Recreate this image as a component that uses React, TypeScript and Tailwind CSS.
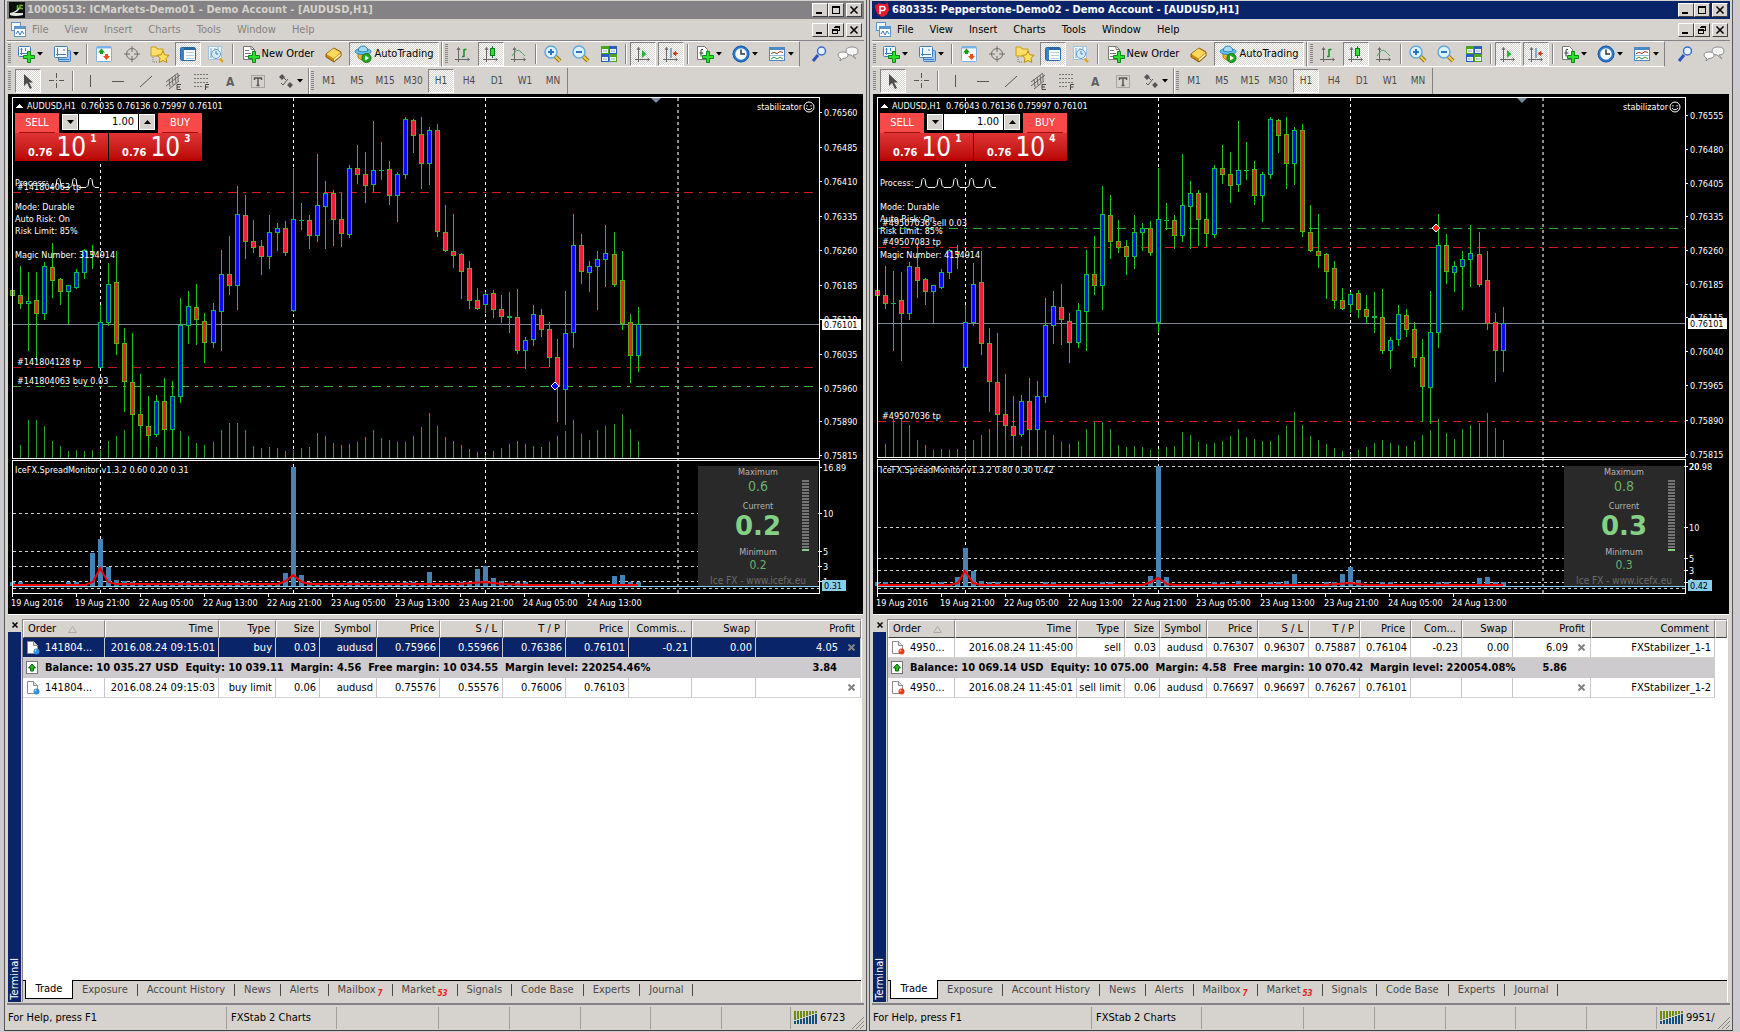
import type { ReactNode } from "react";

type Candle = [high: number, top: number, bottom: number, low: number, dir: string];

type Level = { y: number; color: string; label: string; }

type Terminal = {
    id: string;
    title: string;
    active: boolean;
    quotes: string;
    buyPip: string;
    magic: string;
    waves: number;
    priceY: number;
    splitY: number;
    levels: Level[];
    marker: { x: number; y: number; color: string };
    prices: [string, number][];
    spread: { title: string; max: string; current: string; min: string; avg: string };
    spreadAxis: [string, number][];
    spreadGrid: number[];
    spreadBars: Record<number, number>;
    spreadLine: string;
    overrides: Record<number, Candle>;
    columns: { name: string; width: string }[];
    rows: string[][];
    balance: string;
    balanceProfit: string;
    side: string;
    traffic: string;
}

const candles: Candle[] = [
    [261, 290, 295, 302, "d"], [266, 295, 303, 309, "d"], [272, 301, 303, 351, "u"], [272, 300, 313, 361, "d"],
    [262, 266, 313, 320, "u"], [243, 267, 280, 298, "d"], [278, 279, 291, 305, "d"], [285, 285, 291, 324, "u"],
    [269, 272, 287, 289, "u"], [249, 250, 272, 279, "u"], [245, 251, 254, 269, "d"], [305, 322, 367, 367, "u"],
    [263, 284, 322, 326, "u"], [251, 282, 343, 355, "d"], [328, 343, 381, 412, "d"], [333, 382, 414, 440, "d"],
    [374, 414, 425, 437, "d"], [396, 426, 435, 447, "d"], [395, 401, 434, 437, "u"], [378, 401, 429, 450, "d"],
    [381, 396, 429, 450, "u"], [298, 325, 396, 403, "u"], [291, 306, 325, 344, "u"], [284, 307, 319, 345, "d"],
    [313, 321, 342, 363, "d"], [303, 310, 342, 348, "u"], [250, 274, 311, 351, "u"], [236, 274, 285, 295, "d"],
    [186, 214, 285, 310, "u"], [195, 215, 241, 259, "d"], [220, 241, 247, 253, "d"], [240, 246, 256, 275, "d"],
    [215, 232, 256, 269, "u"], [223, 228, 232, 251, "u"], [221, 228, 252, 256, "d"], [168, 219, 310, 312, "u"],
    [203, 220, 220, 230, "u"], [215, 220, 235, 249, "d"], [154, 205, 235, 242, "u"], [181, 193, 206, 249, "u"],
    [190, 193, 219, 246, "d"], [193, 219, 233, 247, "d"], [165, 168, 234, 238, "u"], [145, 168, 174, 184, "d"],
    [152, 174, 185, 203, "d"], [121, 170, 184, 192, "u"], [142, 170, 170, 180, "u"], [161, 169, 195, 205, "d"],
    [172, 174, 195, 222, "u"], [117, 119, 174, 179, "u"], [119, 120, 135, 153, "d"], [117, 134, 163, 189, "d"],
    [127, 130, 163, 185, "u"], [124, 130, 231, 237, "d"], [205, 232, 250, 252, "d"], [214, 251, 255, 268, "d"],
    [253, 254, 271, 299, "d"], [261, 268, 300, 309, "d"], [288, 300, 308, 310, "d"], [292, 294, 304, 313, "u"],
    [290, 293, 309, 318, "d"], [295, 309, 316, 323, "d"], [292, 316, 317, 333, "u"], [289, 317, 350, 354, "d"],
    [337, 340, 350, 369, "u"], [305, 314, 339, 346, "u"], [309, 315, 329, 337, "d"], [322, 329, 357, 367, "d"],
    [339, 357, 386, 422, "d"], [291, 333, 389, 425, "u"], [214, 245, 332, 348, "u"], [234, 245, 271, 284, "d"],
    [261, 266, 272, 292, "u"], [251, 259, 266, 310, "u"], [225, 253, 259, 287, "u"], [232, 254, 284, 287, "d"],
    [251, 280, 323, 330, "d"], [314, 322, 355, 383, "d"], [307, 324, 355, 372, "u"],
];

const volumes = [
    17, 13, 38, 38, 32, 17, 12, 7, 8, 7, 8, 8, 17, 22, 28, 34, 22, 13, 11, 15, 20, 27, 22, 15, 13, 16, 28, 35, 35, 28,
    12, 10, 11, 10, 7, 8, 10, 11, 25, 22, 15, 13, 14, 16, 21, 28, 20, 18, 16, 16, 22, 31, 45, 32, 21, 17, 13, 9, 6, 3,
    7, 10, 14, 17, 14, 12, 11, 16, 22, 27, 38, 24, 18, 28, 32, 34, 44, 29, 17,
];

const times = [
    "19 Aug 2016", "19 Aug 21:00", "22 Aug 05:00", "22 Aug 13:00", "22 Aug 21:00",
    "23 Aug 05:00", "23 Aug 13:00", "23 Aug 21:00", "24 Aug 05:00", "24 Aug 13:00",
];

const terminals: Terminal[] = [
    {
        id: "icmarkets",
        title: "10000513: ICMarkets-Demo01 - Demo Account - [AUDUSD,H1]",
        active: false,
        quotes: "0.76035 0.76136 0.75997 0.76101",
        buyPip: "3",
        magic: "3134914",
        waves: 3,
        priceY: 324,
        splitY: 458,
        levels: [
            { y: 192, color: "#d41c1c", label: "#141804063 tp" },
            { y: 367, color: "#c01818", label: "#141804128 tp" },
            { y: 386, color: "#3fae3f", label: "#141804063 buy 0.03" },
        ],
        marker: { x: 554, y: 386, color: "#0000ff" },
        prices: [
            ["0.76560", 112], ["0.76485", 147], ["0.76410", 181], ["0.76335", 216], ["0.76260", 250], ["0.76185", 285],
            ["0.76110", 319], ["0.76035", 354], ["0.75960", 388], ["0.75890", 421], ["0.75815", 455],
        ],
        spread: { title: "IceFX.SpreadMonitor v1.3.2 0.60 0.20 0.31", max: "0.6", current: "0.2", min: "0.2", avg: "0.31" },
        spreadAxis: [["16.89", 467], ["10", 513], ["5", 551], ["3", 566], ["1", 581]],
        spreadGrid: [513, 551, 566, 581, 588],
        spreadBars: { 10: 553, 11: 539, 12: 567, 13: 580, 14: 581, 34: 573, 35: 467, 36: 575, 37: 582, 52: 572, 58: 569, 59: 566, 60: 578, 61: 581, 75: 576, 76: 575 },
        spreadLine: "M12 585H85L93 582L100 568L108 582L116 584H278L286 581L293 575L302 582L310 584H460L485 582L502 584L530 585H638",
        overrides: {},
        columns: [
            { name: "Order", width: "w-[82px]" }, { name: "Time", width: "w-[114px]" }, { name: "Type", width: "w-[57px]" },
            { name: "Size", width: "w-[44px]" }, { name: "Symbol", width: "w-[57px]" }, { name: "Price", width: "w-[63px]" },
            { name: "S / L", width: "w-[63px]" }, { name: "T / P", width: "w-[63px]" }, { name: "Price", width: "w-[63px]" },
            { name: "Commis...", width: "w-[63px]" }, { name: "Swap", width: "w-[64px]" }, { name: "Profit", width: "w-auto" },
        ],
        rows: [
            ["141804...", "2016.08.24 09:15:01", "buy", "0.03", "audusd", "0.75966", "0.55966", "0.76386", "0.76101", "-0.21", "0.00", "4.05"],
            ["141804...", "2016.08.24 09:15:03", "buy limit", "0.06", "audusd", "0.75576", "0.55576", "0.76006", "0.76103", "", "", ""],
        ],
        balance: "Balance: 10 035.27 USD  Equity: 10 039.11  Margin: 4.56  Free margin: 10 034.55  Margin level: 220254.46%",
        balanceProfit: "3.84",
        side: "#2a8fdc",
        traffic: "6723",
    },
    {
        id: "pepperstone",
        title: "680335: Pepperstone-Demo02 - Demo Account - [AUDUSD,H1]",
        active: true,
        quotes: "0.76043 0.76136 0.75997 0.76101",
        buyPip: "4",
        magic: "4134914",
        waves: 5,
        priceY: 323,
        splitY: 457,
        levels: [
            { y: 228, color: "#2fae2f", label: "#49507036 sell 0.03" },
            { y: 247, color: "#d41c1c", label: "#49507083 tp" },
            { y: 421, color: "#d41c1c", label: "#49507036 tp" },
        ],
        marker: { x: 570, y: 228, color: "#f02020" },
        prices: [
            ["0.76555", 115], ["0.76480", 149], ["0.76405", 183], ["0.76335", 216], ["0.76260", 250], ["0.76185", 284],
            ["0.76115", 317], ["0.76040", 351], ["0.75965", 385], ["0.75890", 420], ["0.75815", 454],
        ],
        spread: { title: "IceFX.SpreadMonitor v1.3.2 0.80 0.30 0.42", max: "0.8", current: "0.3", min: "0.3", avg: "0.42" },
        spreadAxis: [["20.98", 466], ["20", 466], ["10", 527], ["5", 558], ["3", 570], ["1", 582]],
        spreadGrid: [466, 527, 558, 570, 582, 588],
        spreadBars: { 10: 577, 11: 548, 12: 571, 13: 581, 34: 576, 35: 466, 36: 577, 45: 581, 51: 581, 52: 574, 58: 574, 59: 567, 60: 580, 75: 578, 76: 577 },
        spreadLine: "M12 585H85L93 583L100 571L108 583L116 585H278L286 582L293 578L302 584L310 585H460L485 583L502 585H638",
        overrides: { 2: [271, 303, 303, 351, "u"], 35: [168, 219, 322, 333, "u"], 69: [291, 332, 387, 424, "u"], 77: [313, 322, 350, 382, "d"], 78: [307, 323, 350, 372, "u"] },
        columns: [
            { name: "Order", width: "w-[67px]" }, { name: "Time", width: "w-[122px]" }, { name: "Type", width: "w-[48px]" },
            { name: "Size", width: "w-[35px]" }, { name: "Symbol", width: "w-[47px]" }, { name: "Price", width: "w-[51px]" },
            { name: "S / L", width: "w-[51px]" }, { name: "T / P", width: "w-[51px]" }, { name: "Price", width: "w-[51px]" },
            { name: "Com...", width: "w-[51px]" }, { name: "Swap", width: "w-[51px]" }, { name: "Profit", width: "w-[78px]" },
            { name: "Comment", width: "w-auto" },
        ],
        rows: [
            ["4950...", "2016.08.24 11:45:00", "sell", "0.03", "audusd", "0.76307", "0.96307", "0.75887", "0.76104", "-0.23", "0.00", "6.09", "FXStabilizer_1-1"],
            ["4950...", "2016.08.24 11:45:01", "sell limit", "0.06", "audusd", "0.76697", "0.96697", "0.76267", "0.76101", "", "", "", "FXStabilizer_1-2"],
        ],
        balance: "Balance: 10 069.14 USD  Equity: 10 075.00  Margin: 4.58  Free margin: 10 070.42  Margin level: 220054.08%",
        balanceProfit: "5.86",
        side: "#e0401c",
        traffic: "9951/",
    },
];

const menus = ["File", "View", "Insert", "Charts", "Tools", "Window", "Help"];
const periods = ["M1", "M5", "M15", "M30", "H1", "H4", "D1", "W1", "MN"];
const tabs: [string, string][] = [
    ["Exposure", ""], ["Account History", ""], ["News", ""], ["Alerts", ""], ["Mailbox", "7"], ["Market", "53"],
    ["Signals", ""], ["Code Base", ""], ["Experts", ""], ["Journal", ""],
];

const barX = (i: number) => Math.round(12 + i * 8.02);

/* ---------- icons ---------- */

function Svg({ children, w = 18 }: { children: ReactNode; w?: number }) {
    return <svg width={w} height="18" viewBox={`0 0 ${w} 18`} fill="none" aria-hidden="true" className="shrink-0">{children}</svg>;
}

const Plus = () => <path d="M10.500 6.500h3v4h4v3h-4v4h-3v-4h-4v-3h4z" fill="#2ee02e" stroke="#0a8a14" />;

const Axes = () => <path d="M4.500 3v14M1 14.500h14M3 5l1.500-2.500L6 5M13.500 13l2 1.500-2 1.500" stroke="#666" />;

const Drop = () => <svg width="6" height="4" viewBox="0 0 6 4" aria-hidden="true" className="shrink-0"><path d="M0 0h6L3 3.500z" fill="#000" /></svg>;

const icons: Record<string, ReactNode> = {
    newChart: <Svg><rect x="1.500" y="1.500" width="12" height="10" rx="1" fill="#f2f8ff" stroke="#3f7ec0" /><path d="M4.500 3v7M3 8.500h9M3.500 4.500h2M8.500 3v3" stroke="#3f7ec0" /><Plus /></Svg>,
    profiles: <Svg><rect x="5.500" y="5.500" width="12" height="11" rx="1" fill="#9cc6ee" stroke="#3f7ec0" /><rect x="1.500" y="1.500" width="13" height="11" rx="1" fill="#f2f8ff" stroke="#3f7ec0" /><path d="M4.500 3v8M3 9.500h10M11 4v2M6 14.500h10" stroke="#3f7ec0" /></Svg>,
    market: <Svg><rect x="1.500" y="1.500" width="15" height="15" rx="1" fill="#fff" stroke="#7ab2e6" /><path d="M2 2.500h14" stroke="#7ab2e6" strokeWidth="2" /><path d="M3 7.500l3.500-4 3.500 4H8V9H5V7.500z" fill="#16a016" /><path d="M8 11l3.500 4 3.500-4h-2V9h-3v2z" fill="#e8501c" /></Svg>,
    crosshair: <Svg><circle cx="9" cy="9" r="5.500" stroke="#6c6c6c" /><path d="M9 1v6M9 11v6M1 9h6M11 9h6" stroke="#6c6c6c" /></Svg>,
    navigator: <Svg w={20}><path d="M1 2h5l1 2h6v7H1z" fill="#ffdf6a" stroke="#c99a1c" /><path d="M3 12v5h5" stroke="#777" strokeDasharray="1 1" /><path d="M13 6l1.800 3.800 4.200.5-3 3 .8 4.200L13 15.500l-3.800 2 .8-4.200-3-3 4.200-.5z" fill="#ffe25c" stroke="#b98a14" /></Svg>,
    terminal: <Svg><rect x="1.500" y="2.500" width="15" height="13" rx="1" fill="#fff" stroke="#2468a8" /><path d="M2 3h3v12H2z" fill="#3c82c8" /><path d="M5 4h11" stroke="#2468a8" strokeWidth="2" /><path d="M7 7.500h8M7 10.500h8M7 13.500h8" stroke="#b8cce0" /></Svg>,
    tester: <Svg><rect x="1.500" y="1.500" width="13" height="13" fill="#eef6ff" stroke="#a4c4e4" /><path d="M4 3v10M8 3v2M11 2v3" stroke="#7aa8d4" /><circle cx="9" cy="9" r="4.500" fill="#d4ebfa" stroke="#6c9cc8" /><path d="M9 6v3h2" stroke="#4c80b0" /><path d="M12.500 13.500l3.500 3.500" stroke="#e0a828" strokeWidth="2.500" /></Svg>,
    order: <Svg><path d="M1.500 1.500h8l3 3v10h-11z" fill="#fff" stroke="#777" /><path d="M9 1.500v3h3.500M3 5.500h4M3 8.500h6M3 11.500h4" stroke="#777" /><Plus /></Svg>,
    book: <Svg><path d="M1 9l8-6 7 4v4l-7 6-8-5z" fill="#c98a12" stroke="#8c5c08" /><path d="M1.500 9l7-5.500 7 4-7 6z" fill="#ffd85c" /><path d="M9 14l6.500-5.500v2L9 16z" fill="#fff4cc" /></Svg>,
    expert: <Svg><path d="M4 8h9v4.500q-4 5-9 0z" fill="#f0b030" stroke="#b87c10" /><ellipse cx="9" cy="6.500" rx="8" ry="3" fill="#6cc4ea" stroke="#2a84b4" /><path d="M4 6q1-5 5-5t5 5q-5 2-10 0" fill="#a4dcf4" stroke="#2a84b4" /><circle cx="12.500" cy="13" r="4.500" fill="#22a822" stroke="#107810" /><path d="M11 10.500v5l4-2.500z" fill="#fff" /></Svg>,
    bars: <Svg><Axes /><path d="M10 4v8M10 4.500h2.500M8 11.500h2" stroke="#1c8c2c" strokeWidth="1.500" /></Svg>,
    candles: <Svg><Axes /><path d="M10.500 1v12" stroke="#0c7c1c" /><rect x="8.500" y="3.500" width="4" height="7" fill="#30dc40" stroke="#0c7c1c" /></Svg>,
    line: <Svg><Axes /><path d="M2 11q5-8 8-5t5 5" stroke="#4ca45c" /></Svg>,
    zoomIn: <Svg><path d="M11 11l5 5" stroke="#9c7814" strokeWidth="4" /><path d="M11 11l5 5" stroke="#f4cc4c" strokeWidth="2" /><circle cx="7" cy="7" r="6" fill="#dcf2ff" stroke="#64a8e0" strokeWidth="1.500" /><path d="M4 7h6M7 4v6" stroke="#2c74bc" strokeWidth="2" /></Svg>,
    zoomOut: <Svg><path d="M11 11l5 5" stroke="#9c7814" strokeWidth="4" /><path d="M11 11l5 5" stroke="#f4cc4c" strokeWidth="2" /><circle cx="7" cy="7" r="6" fill="#dcf2ff" stroke="#64a8e0" strokeWidth="1.500" /><path d="M4 7h6" stroke="#2c74bc" strokeWidth="2" /></Svg>,
    tile: <Svg><path d="M1 1h8v8H1zM9 9h8v8H9z" fill="#4ca41c" /><path d="M9 1h8v8H9zM1 9h8v8H1z" fill="#2c5cc0" /><path d="M2 4h6v4H2zM10 4h6v4h-6zM2 12h6v4H2zM10 12h6v4h-6z" fill="#f0f6fc" /><path d="M3 6h4M11 6h4M3 14h4M11 14h4" stroke="#90a8c8" /></Svg>,
    scroll: <Svg><Axes /><path d="M8 5v8l4.500-4z" fill="#28b438" /></Svg>,
    shift: <Svg><Axes /><path d="M9 3v10" stroke="#5c94c4" strokeWidth="1.500" /><path d="M16 8.500h-4M14 6.500l-3 2 3 2z" stroke="#c83c1c" fill="#c83c1c" /></Svg>,
    indicators: <Svg><path d="M1.500 1.500h7l3 3v10h-10z" fill="#fff" stroke="#777" /><path d="M7 4.500q-2-1-2 1v6M3.500 8h4" stroke="#333" /><Plus /></Svg>,
    clock: <Svg><circle cx="9" cy="9" r="7" fill="#f4faff" stroke="#2c78c8" strokeWidth="2.500" /><circle cx="9" cy="9" r="8" stroke="#1c5ca4" /><path d="M9 4.500V9h4" stroke="#333" strokeWidth="1.500" /></Svg>,
    template: <Svg><rect x="1.500" y="2.500" width="15" height="13" fill="#fff" stroke="#4c88c4" /><path d="M1 3.500h16" stroke="#4c88c4" strokeWidth="3" /><path d="M3 8.500l3-1 3 1 3-2 3 1" stroke="#8c3c1c" /><path d="M2 10.500h14" stroke="#9cbcdc" /><path d="M3 14l3-2 3 2 3-2 3 2" stroke="#2c9c3c" /></Svg>,
    search: <Svg><path d="M7 10l-5 6" stroke="#2c54c0" strokeWidth="3" /><circle cx="10.500" cy="6" r="4" fill="#e8f2ff" stroke="#3c6cd0" strokeWidth="1.500" /></Svg>,
    chat: <Svg w={22}><path d="M9 6q0-4 6-4t6 4-5 4l3 4-5-4q-5 0-5-4z" fill="#f4f4f4" stroke="#8c8c8c" /><path d="M1 10q0-3 5-3t5 3-5 3.500L3 16l.5-3Q1 12 1 10z" fill="#fff" stroke="#8c8c8c" /></Svg>,
    pointer: <Svg><path d="M5 2v12l3-3 3 6 2-1-3-5.500h4z" fill="#4c4c4c" /></Svg>,
    cross: <Svg w={16}><path d="M8.500 1v5M8.500 11v5M1 8.500h5M11 8.500h5M8 8.500h1" stroke="#555" /></Svg>,
    vline: <Svg><path d="M9.500 3v12" stroke="#555" /></Svg>,
    hline: <Svg><path d="M3 9.500h12" stroke="#555" /></Svg>,
    trend: <Svg><path d="M3 15L15 4" stroke="#555" /></Svg>,
    channel: <Svg><path d="M1 14L15 3M1 10L13 1M4 17L14 9M4 7l1 8M7 5l1 8M10 3l1 8M13 2l0 7" stroke="#666" /><path d="M16 12.500h-4v5h4M12 15h3" stroke="#444" /></Svg>,
    fibo: <Svg><path d="M1 2.500h14M1 6.500h14M1 10.500h14M1 14.500h9" stroke="#777" strokeDasharray="2 1" /><path d="M16 12.500h-3.500V18M12.500 15h3" stroke="#444" /></Svg>,
    text: <Svg><text x="5" y="14" fontSize="12" fontWeight="700" fill="#606060">A</text></Svg>,
    label: <Svg><rect x="2.500" y="3.500" width="13" height="12" stroke="#777" strokeDasharray="1 1" /><path d="M5.500 8V6h7v2M9 6v8M7.500 13.500h3" stroke="#555" strokeWidth="1.500" /></Svg>,
    arrows: <Svg><path d="M2 5l3-3 3 3-3 3zM10 13l3-3 3 3-3 3z" fill="#555" /><path d="M4 11l2 2 5-6M7 6l2 2" stroke="#555" /></Svg>,
};

function ChartWindowIcon() {
    return (
        <svg width="15" height="15" viewBox="0 0 15 15" fill="none" aria-hidden="true">
            <rect x=".5" y=".5" width="9" height="8" fill="#eef6ff" stroke="#5a94cc" />
            <rect x="3.500" y="4.500" width="11" height="10" fill="#fff" stroke="#5a94cc" />
            <path d="M4 6h10" stroke="#5a94cc" strokeWidth="2" />
            <path d="M5 12l2-3 2 4 2-4 2 3" stroke="#3c78b4" />
        </svg>
    );
}

function BrandIcon({ id }: { id: string }) {
    if (id === "icmarkets") {
        return (
            <svg width="16" height="16" viewBox="0 0 16 16" aria-hidden="true">
                <rect width="16" height="16" fill="#0c100c" />
                <path d="M1 11q6-1 9-6l1 1q-2 4-6 5h9v2q-8 2-13 0z" fill="#e4e8e4" />
                <path d="M8.500 3v4M14 3.500h-3v3h3" stroke="#6cb42c" strokeWidth="1.500" fill="none" />
            </svg>
        );
    }
    return (
        <svg width="16" height="16" viewBox="0 0 16 16" fill="none" aria-hidden="true">
            <path d="M1 3q3 0 4-2 4 2 9 0l1 7q-2 6-7 7Q1 12 1 3z" fill="#e01c2c" />
            <path d="M6 12V4.500h3q2 0 2 2t-2 2H6" stroke="#fff" strokeWidth="1.500" />
        </svg>
    );
}

/* ---------- window chrome ---------- */

function CaptionButtons({ restore }: { restore?: boolean }) {
    const button = "flex h-[14px] w-4 items-center justify-center border border-t-white border-l-white border-r-[#404040] border-b-[#404040] bg-[#d6d3ce]";
    return (
        <div className="ml-auto flex pr-[2px]">
            <button type="button" aria-label="Minimize" className={button}>
                <svg width="10" height="10" viewBox="0 0 10 10"><path d="M1 7h6v2H1z" /></svg>
            </button>
            <button type="button" aria-label="Maximize" className={button}>
                <svg width="10" height="10" viewBox="0 0 10 10" fill="none" stroke="#000" shapeRendering="crispEdges">
                    {restore ? <path d="M3.500 1.500h5v4h-2M3 2h6M1.500 4.500h5v4h-5zM1 5h6" /> : <path d="M1.500 1.500h7v7h-7zM1 2h8" />}
                </svg>
            </button>
            <button type="button" aria-label="Close" className={`${button} ml-[2px]`}>
                <svg width="10" height="10" viewBox="0 0 10 10" stroke="#000" strokeWidth="1.500"><path d="M1.500 1.500l7 7M8.500 1.500l-7 7" /></svg>
            </button>
        </div>
    );
}

const Grip = () => <span className="mx-[1px] h-5 w-[3px] shrink-0 bg-[repeating-linear-gradient(#848284_0_1px,#d6d3ce_1px_2px)]" />;
const Sep = () => <span className="mx-[2px] h-5 w-[2px] shrink-0 border-l border-l-[#848284] border-r border-r-white" />;

function Tool({ name, pressed, children, drop, width = "w-7" }: { name: string; pressed?: boolean; children?: ReactNode; drop?: boolean; width?: string }) {
    return (
        <button type="button" aria-label={name} aria-pressed={pressed} className={`flex h-6 shrink-0 items-center justify-center px-[1px] ${width}`}>
            <span
                className={`flex h-6 w-full items-center justify-center gap-[2px] border ${pressed ? "border-t-[#848284] border-l-[#848284] border-r-white border-b-white bg-[repeating-conic-gradient(#fff_0_25%,#d6d3ce_0_50%)] bg-[length:2px_2px]" : "border-transparent"}`}
            >
                {icons[name]}
                {children}
                {drop && <Drop />}
            </span>
        </button>
    );
}

function Toolbars() {
    return (
        <div className="text-[11px]">
            <div className="flex h-[27px] items-center border-t border-t-[#848284]">
                <div className="flex h-[26px] items-center border-t border-b border-r border-t-white border-b-white border-r-[#848284] pr-[1px]">
                    <Grip />
                    <Tool name="newChart" drop width="w-9" />
                    <Tool name="profiles" drop width="w-9" />
                    <Sep />
                    <Tool name="market" />
                    <Tool name="crosshair" />
                    <Tool name="navigator" />
                    <Tool name="terminal" pressed />
                    <Tool name="tester" />
                    <Sep />
                    <Tool name="order" width="w-[84px]">New Order</Tool>
                    <Tool name="book" />
                    <Tool name="expert" pressed width="w-[92px]">AutoTrading</Tool>
                </div>
                <div className="flex h-[26px] items-center border-t border-b border-l border-r border-t-white border-b-white border-l-white border-r-[#848284] pl-[1px]">
                    <Grip />
                    <Tool name="bars" />
                    <Tool name="candles" pressed />
                    <Tool name="line" />
                    <Sep />
                    <Tool name="zoomIn" />
                    <Tool name="zoomOut" />
                    <Tool name="tile" />
                    <Sep />
                    <Tool name="scroll" pressed />
                    <Tool name="shift" pressed />
                    <Sep />
                    <Tool name="indicators" drop width="w-9" />
                    <Tool name="clock" drop width="w-9" />
                    <Tool name="template" drop width="w-9" />
                </div>
                <div className="ml-auto flex pr-[2px]">
                    <Tool name="search" />
                    <Tool name="chat" />
                </div>
            </div>
            <div className="flex h-[27px] items-center text-[10px] text-[#4a4a4a]">
                <div className="flex h-[26px] items-center gap-0 border-r border-r-[#848284]">
                    <Grip />
                    <span className="flex pl-[2px]">
                        <Tool name="pointer" pressed />
                        <Tool name="cross" />
                    </span>
                    <Sep />
                    <Tool name="vline" />
                    <Tool name="hline" />
                    <Tool name="trend" />
                    <Tool name="channel" />
                    <Tool name="fibo" />
                    <Tool name="text" />
                    <Tool name="label" />
                    <Tool name="arrows" drop width="w-9" />
                </div>
                <div className="flex h-[26px] items-center border-l border-r border-l-white border-r-[#848284]">
                    <Grip />
                    {periods.map((period) => (
                        <Tool key={period} name={period} pressed={period === "H1"}>{period}</Tool>
                    ))}
                </div>
            </div>
        </div>
    );
}

/* ---------- chart ---------- */

function PriceChart({ t }: { t: Terminal }) {
    const wave = Array.from({ length: t.waves }, (_, i) => `H${54 + i * 16}l2 -2l1 -6l1 -1h1l1 1l1 6l2 2`).join("");
    return (
        <svg className="block h-[520px] w-full" shapeRendering="crispEdges" role="img" aria-label="AUDUSD H1 chart">
            {/* the numbers in the data are counted from the top left of the window */}
            <g transform="translate(-8 -94)">
                {[100, 293, 485].map((x) => (
                    <line key={x} x1={x + 0.5} x2={x + 0.5} y1="98" y2="593" stroke="#fff" strokeDasharray="3 3" />
                ))}
                <line x1="678" x2="678" y1="98" y2="593" stroke="#8c8c8c" strokeWidth="2" strokeDasharray="3 3" />
                <line x1="12" x2="110%" y1={t.priceY + 0.5} y2={t.priceY + 0.5} stroke="#778899" />
                {t.levels.map((level) => (
                    <line key={level.y} x1="12" x2="110%" y1={level.y + 0.5} y2={level.y + 0.5} stroke={level.color} strokeDasharray="9 6 3 6" />
                ))}
                {volumes.map((v, i) => (
                    <rect key={i} x={barX(i)} y={t.splitY - v} width="1" height={v} fill="#2f9e2f" />
                ))}
                {candles.map((candle, i) => {
                    const [high, top, bottom, low, dir] = t.overrides[i] ?? candle;
                    const x = barX(i);
                    return (
                        <g key={i}>
                            <rect x={x} y={high} width="1" height={low - high} fill="#1fc41f" />
                            <rect x={x - 2} y={top} width="5" height={bottom - top + 1} fill={dir === "u" ? "#10b850" : "#5fae10"} />
                            {bottom - top > 1 && <rect x={x - 1} y={top + 1} width="3" height={bottom - top - 1} fill={dir === "u" ? "#0a0aff" : "#f01c38"} />}
                        </g>
                    );
                })}
                <path
                    d={`M${t.marker.x - 3} ${t.marker.y}l4 -4 4 4 -4 4z`}
                    fill={t.marker.color}
                    stroke="#fff"
                    shapeRendering="auto"
                />

                {/* spread indicator */}
                {t.spreadGrid.map((y) => (
                    <line key={y} x1="13" x2="110%" y1={y + 0.5} y2={y + 0.5} stroke="#cfcfcf" strokeDasharray="3 3" />
                ))}
                {candles.map((_, i) => {
                    const y = t.spreadBars[i] ?? (i % 7 < 2 ? 582 : 584);
                    return <rect key={i} x={barX(i) - 2} y={y} width="5" height={586 - y} fill="#4682b4" />;
                })}
                <path d={t.spreadLine} stroke="#f00000" strokeWidth="2" fill="none" shapeRendering="auto" />
                <line x1="12" x2="110%" y1="586.5" y2="586.5" stroke="#87ceeb" />

                {/* borders of both panes */}
                <path d={`M12.5 97V${t.splitY + 1}M12.5 ${t.splitY + 2}V594`} stroke="#fff" />
                {[97, t.splitY, t.splitY + 2, 593].map((y) => (
                    <line key={y} x1="12" x2="110%" y1={y + 0.5} y2={y + 0.5} stroke="#fff" />
                ))}

                <g fill="#fff" fontSize="9">
                    <path d="M15 108h8l-4-4z" />
                    <text x="27" y="109" className="whitespace-pre">{`AUDUSD,H1  ${t.quotes}`}</text>
                    <text x="15" y="186">Process:</text>
                    <path d={`M50 187.500${wave}h4`} stroke="#fff" fill="none" shapeRendering="auto" />
                    <text x="15" y="210">Mode: Durable</text>
                    <text x="15" y="222">Auto Risk: On</text>
                    <text x="15" y="234">Risk Limit: 85%</text>
                    <text x="15" y="258">{`Magic Number: ${t.magic}`}</text>
                    {t.levels.map((level) => (
                        <text key={level.y} x="17" y={level.y - 2}>{level.label}</text>
                    ))}
                    <text x="15" y="473">{t.spread.title}</text>
                    {times.map((time, i) => (
                        <g key={time}>
                            <rect x={12 + i * 64} y="594" width="1" height="3" />
                            <text x={11 + i * 64} y="606">{time}</text>
                        </g>
                    ))}
                </g>
            </g>
        </svg>
    );
}

function PriceAxis({ t }: { t: Terminal }) {
    return (
        <svg className="block h-[520px] w-11 shrink-0 bg-black" shapeRendering="crispEdges" fill="#fff" fontSize="9" aria-label="Price scale">
            <g transform="translate(0 -94)">
                <rect x="0" y="97" width="1" height={t.splitY - 96} />
                <rect x="0" y={t.splitY + 2} width="1" height={592 - t.splitY} />
                {t.prices.map(([price, y]) => (
                    <g key={price}>
                        <rect x="1" y={y} width="2" height="1" />
                        <text x="5" y={y + 4}>{price}</text>
                    </g>
                ))}
                {t.spreadAxis.map(([value, y]) => (
                    <g key={value}>
                        <rect x="1" y={y} width="2" height="1" />
                        <text x="4" y={y + 4}>{value}</text>
                    </g>
                ))}
                <rect x="3" y={t.priceY - 5} width="39" height="11" />
                <text x="5" y={t.priceY + 4} fill="#000">0.76101</text>
                <rect x="3" y="580" width="24" height="11" fill="#87ceeb" />
                <text x="5" y="589" fill="#000">{t.spread.avg}</text>
            </g>
        </svg>
    );
}

function PriceButton({ label, pip, id }: { label: string; pip: string; id: string }) {
    const sell = label === "SELL";
    return (
        <button type="button" id={`${id}-${label}`} className={`flex w-[93px] flex-col text-white ${sell ? "items-start" : "items-end"}`}>
            <span className="flex h-5 w-11 items-center justify-center bg-[#f84848] text-[11px] leading-5">
                <span className="w-9 border-b border-b-[#a01010] leading-[18px]">{label}</span>
            </span>
            <span className="flex h-7 w-full items-end bg-linear-to-b from-[#e03434] to-[#b80000] pb-[2px] pl-[13px]">
                <span className="text-[11px] font-bold leading-3">0.76</span>
                <span className="ml-1 text-[26px] leading-6">10</span>
                <span className="ml-1 self-start text-[10px] leading-3 font-bold">{pip}</span>
            </span>
        </button>
    );
}

function OneClick({ t }: { t: Terminal }) {
    const spin = "flex h-4 w-4 items-center justify-center border border-white bg-[#d6d3ce]";
    return (
        <div className="absolute top-[19px] left-[7px] flex gap-[1px]">
            <PriceButton label="SELL" pip="1" id={t.id} />
            <PriceButton label="BUY" pip={t.buyPip} id={t.id} />
            <div className="absolute top-0 left-11 flex h-[18px] w-[99px] items-center justify-center gap-[1px] bg-black">
                <button type="button" aria-label="Less" className={spin}><svg width="7" height="4" viewBox="0 0 7 4"><path d="M0 0h7L3.500 4z" /></svg></button>
                <input aria-label="Volume" defaultValue="1.00" className="h-4 w-[59px] bg-white pr-1 text-right text-[11px] text-black outline-none" />
                <button type="button" aria-label="More" className={spin}><svg width="7" height="4" viewBox="0 0 7 4"><path d="M0 4h7L3.500 0z" /></svg></button>
            </div>
        </div>
    );
}

function SpreadPanel({ t }: { t: Terminal }) {
    return (
        <div className="absolute top-[372px] right-[45px] flex h-[120px] w-[120px] flex-col items-center bg-[#292929] text-[9px] leading-3 text-[#b4b4b4]">
            <span>Maximum</span>
            <span className="text-[14px] leading-4 text-[#6cb06c]">{t.spread.max}</span>
            <span className="mt-[6px]">Current</span>
            <span className="font-['DejaVu_Sans',sans-serif] text-[26px] leading-7 font-bold text-[#84d084]">{t.spread.current}</span>
            <span className="mt-[6px]">Minimum</span>
            <span className="text-[12px] leading-[14px] text-[#6cb06c]">{t.spread.min}</span>
            <span className="mt-[3px] text-[10px] text-[#6a6a6a]">Ice FX - www.icefx.eu</span>
            <span className="absolute top-[14px] right-[9px] h-[69px] w-[7px] bg-[repeating-linear-gradient(#747474_0_2px,#292929_2px_3px)]" />
            <span className="absolute top-[83px] right-[9px] h-[2px] w-[7px] bg-[#84d084]" />
        </div>
    );
}

function Chart({ t }: { t: Terminal }) {
    return (
        <div className="ml-[1px] mr-[1px] border-b border-b-white bg-black">
            <div className="relative flex">
                <div className="min-w-0 flex-1 overflow-hidden"><PriceChart t={t} /></div>
                <PriceAxis t={t} />
                <OneClick t={t} />
                <div className="absolute top-[5px] right-[48px] flex items-center gap-[1px] text-[9px] text-white">
                    stabilizator
                    <svg width="12" height="12" viewBox="0 0 12 12" fill="none" stroke="#fff" aria-hidden="true">
                        <circle cx="6" cy="6" r="5" /><path d="M4 4v1.500M8 4v1.500M3 7q3 3.500 6 0" />
                    </svg>
                </div>
                <svg width="10" height="5" viewBox="0 0 10 5" className="absolute top-1 right-[202px]" aria-hidden="true"><path d="M0 0h10L5 5z" fill="#778899" /></svg>
                <SpreadPanel t={t} />
            </div>
        </div>
    );
}

/* ---------- terminal panel ---------- */

function OrderIcon({ color }: { color: string }) {
    return (
        <svg width="14" height="15" viewBox="0 0 14 15" aria-hidden="true" className="shrink-0">
            <path d="M1.500 1.500h6l4 4v8h-10z" fill="#fff" stroke="#8a8a8a" />
            <path d="M7.500 1.500v4h4" fill="#ddd" stroke="#8a8a8a" />
            <circle cx="10.500" cy="11.500" r="3" fill={color} />
            <circle cx="9.500" cy="10.500" r="1" fill="#fff" fillOpacity=".6" />
        </svg>
    );
}

function OrderRow({ t, row, selected }: { t: Terminal; row: string[]; selected: boolean }) {
    return (
        <tr className={`h-5 ${selected ? "bg-[#0a246a] text-white" : "bg-white"}`}>
            {row.map((cell, i) => (
                <td key={i} className="overflow-hidden border-r border-b border-r-[#c8c8c8] border-b-[#d6d3ce] p-0 pr-[3px] text-right whitespace-nowrap">
                    {i === 0 ? (
                        <span className="flex items-center gap-[5px] pl-[3px]"><OrderIcon color={t.side} />{cell}</span>
                    ) : i === 11 ? (
                        <span className="flex items-center justify-end gap-[10px]">
                            {cell}
                            <button type="button" aria-label="Close order" className="flex h-4 w-[9px] items-center">
                                <svg width="7" height="7" viewBox="0 0 7 7" stroke="#848284" strokeWidth="2"><path d="M.5 .5l6 6M6.500 .5l-6 6" /></svg>
                            </button>
                        </span>
                    ) : cell}
                </td>
            ))}
            {t.columns.length > 12 && <td className="p-0" />}
        </tr>
    );
}

function Trades({ t }: { t: Terminal }) {
    const head = "border-t border-l border-r border-b border-t-white border-l-white border-r-[#848284] border-b-[#404040] bg-[#d6d3ce] p-0 pr-[5px] text-right font-normal overflow-hidden";
    return (
        <table className="w-full table-fixed border-separate border-spacing-0 text-[11px] leading-4">
            <colgroup>
                {t.columns.map((column, i) => <col key={i} className={column.width} />)}
                {t.columns.length > 12 && <col className="w-3" />}
            </colgroup>
            <thead>
                <tr className="h-[18px]">
                    {t.columns.map((column, i) => (
                        <th key={i} scope="col" className={head}>
                            {i === 0 ? (
                                <span className="flex items-center gap-3 pl-1">Order<svg width="9" height="7" viewBox="0 0 9 7" fill="none" stroke="#aaa"><path d="M.5 6.500h8L4.500 .5z" /></svg></span>
                            ) : column.name}
                        </th>
                    ))}
                    {t.columns.length > 12 && <th className={head} aria-label="Filler" />}
                </tr>
            </thead>
            <tbody>
                <OrderRow t={t} row={t.rows[0]} selected={!t.active} />
                <tr className="h-5 bg-[#cecbce] font-bold">
                    <td colSpan={11} className="p-0">
                        <span className="flex items-center gap-[6px] overflow-visible pl-[3px] whitespace-pre">
                            <svg width="13" height="14" viewBox="0 0 13 14" aria-hidden="true" className="shrink-0">
                                <rect x=".5" y=".5" width="11" height="12" fill="#fff" stroke="#777" />
                                <path d="M6 3l3.500 4h-2v3h-3V7h-2z" fill="#28b428" stroke="#0c6c0c" />
                            </svg>
                            {t.balance}
                        </span>
                    </td>
                    <td className="p-0 pr-6 text-right">{t.balanceProfit}</td>
                    {t.columns.length > 12 && <><td /><td className="bg-white" /></>}
                </tr>
                <OrderRow t={t} row={t.rows[1]} selected={false} />
            </tbody>
        </table>
    );
}

function TerminalPanel({ t }: { t: Terminal }) {
    return (
        <section aria-label="Terminal" className="flex flex-1 pt-1">
            <div className="ml-[1px] flex w-[14px] shrink-0 flex-col">
                <button type="button" aria-label="Close terminal" className="flex h-[13px] items-start justify-center pt-[3px]">
                    <svg width="6" height="6" viewBox="0 0 6 6" stroke="#000" strokeWidth="1.500"><path d="M.5 .5l5 5M5.500 .5l-5 5" /></svg>
                </button>
                <div className="mr-[1px] flex flex-1 items-end justify-center bg-[#0a246a] pb-[2px]">
                    <span className="rotate-180 text-[11px] leading-[13px] text-white [writing-mode:vertical-rl]">Terminal</span>
                </div>
            </div>
            <div className="mr-[2px] flex min-w-0 flex-1 flex-col border-l border-l-[#848284] border-r border-r-white">
                <div className="flex-1 border-t border-t-[#848284] bg-white"><Trades t={t} /></div>
                <div className="flex h-[22px] border-t border-t-black text-[11px] text-[#4a4a4a]" role="tablist">
                    <button type="button" role="tab" aria-selected="true" className="-mt-[1px] ml-[2px] h-[19px] w-12 border-r border-b border-l border-black bg-white text-black">Trade</button>
                    {tabs.map(([name, count]) => (
                        <button key={name} type="button" role="tab" aria-selected="false" className="flex h-[18px] items-center pl-[9px]">
                            {name}
                            {count && <span className="ml-[2px] self-end text-[8px] leading-[11px] font-bold text-[#e81c1c] italic">{count}</span>}
                            <span className="ml-[9px] h-3 w-[1px] bg-[#4a4a4a]" />
                        </button>
                    ))}
                </div>
            </div>
        </section>
    );
}

function StatusBar({ t }: { t: Terminal }) {
    const cell = "h-[22px] border-l border-l-[#a09e9a]";
    return (
        <footer className="mt-[1px] flex h-[27px] items-center border-t-2 border-t-[#848284] text-[11px]">
            <span className="w-[219px] shrink-0 pl-[1px]">For Help, press F1</span>
            <span className={`${cell} flex w-[110px] shrink-0 items-center pl-1`}>FXStab 2 Charts</span>
            <span className={`${cell} w-[102px] shrink-0`} />
            <span className={`${cell} w-[71px] shrink-0`} />
            <span className={`${cell} w-[71px] shrink-0`} />
            <span className={`${cell} w-[70px] shrink-0`} />
            <span className={`${cell} w-[71px] shrink-0`} />
            <span className={`${cell} flex-1`} />
            <span className={`${cell} flex w-[74px] shrink-0 items-center gap-[2px] pl-[3px]`}>
                <svg width="24" height="13" viewBox="0 0 24 13" aria-hidden="true">
                    {[0, 1, 2, 3, 4, 5, 6, 7].map((i) => (
                        <g key={i}>
                            <rect x={i * 3} y="0" width="2" height={9 - i} fill="#6c8c14" />
                            <rect x={i * 3} y={10 - i} width="2" height={3 + i} fill="#14507c" />
                        </g>
                    ))}
                </svg>
                {t.traffic}
                <svg width="13" height="14" viewBox="0 0 13 14" className="ml-auto self-end" stroke="#848284" aria-hidden="true"><path d="M1 14L13 2M5 14l8-8M9 14l4-4" /></svg>
            </span>
        </footer>
    );
}

function TerminalWindow({ t }: { t: Terminal }) {
    return (
        <main className="flex min-w-0 flex-col border-l border-r border-b border-l-[#555] border-r-[#555] border-b-[#404040] bg-[#d6d3ce] px-[2px] pt-[1px]">
            <header className={`flex h-[18px] items-center gap-[2px] pl-[2px] ${t.active ? "bg-[#0a246a] text-white" : "bg-[#848284] text-[#d6d3ce]"}`}>
                <BrandIcon id={t.id} />
                <h1 className="text-[11px] font-bold whitespace-nowrap">{t.title}</h1>
                <CaptionButtons />
            </header>
            <nav className={`flex h-[21px] items-center pl-1 text-[11px] ${t.active ? "text-black" : "text-[#848284]"}`}>
                <ChartWindowIcon />
                <div className="flex gap-4 pl-[6px]">
                    {menus.map((menu) => <button key={menu} type="button">{menu}</button>)}
                </div>
                <CaptionButtons restore />
            </nav>
            <Toolbars />
            <Chart t={t} />
            <TerminalPanel t={t} />
            <StatusBar t={t} />
        </main>
    );
}

function App() {
    return (
        <div className="grid min-h-screen grid-cols-[863fr_864fr] gap-[2px] bg-[#cecbce] pr-[7px] pb-[1px] pl-1 font-['DejaVu_Sans_Condensed','DejaVu_Sans',sans-serif] leading-4 text-black">
            {terminals.map((t) => <TerminalWindow key={t.id} t={t} />)}
        </div>
    );
}

export default App
